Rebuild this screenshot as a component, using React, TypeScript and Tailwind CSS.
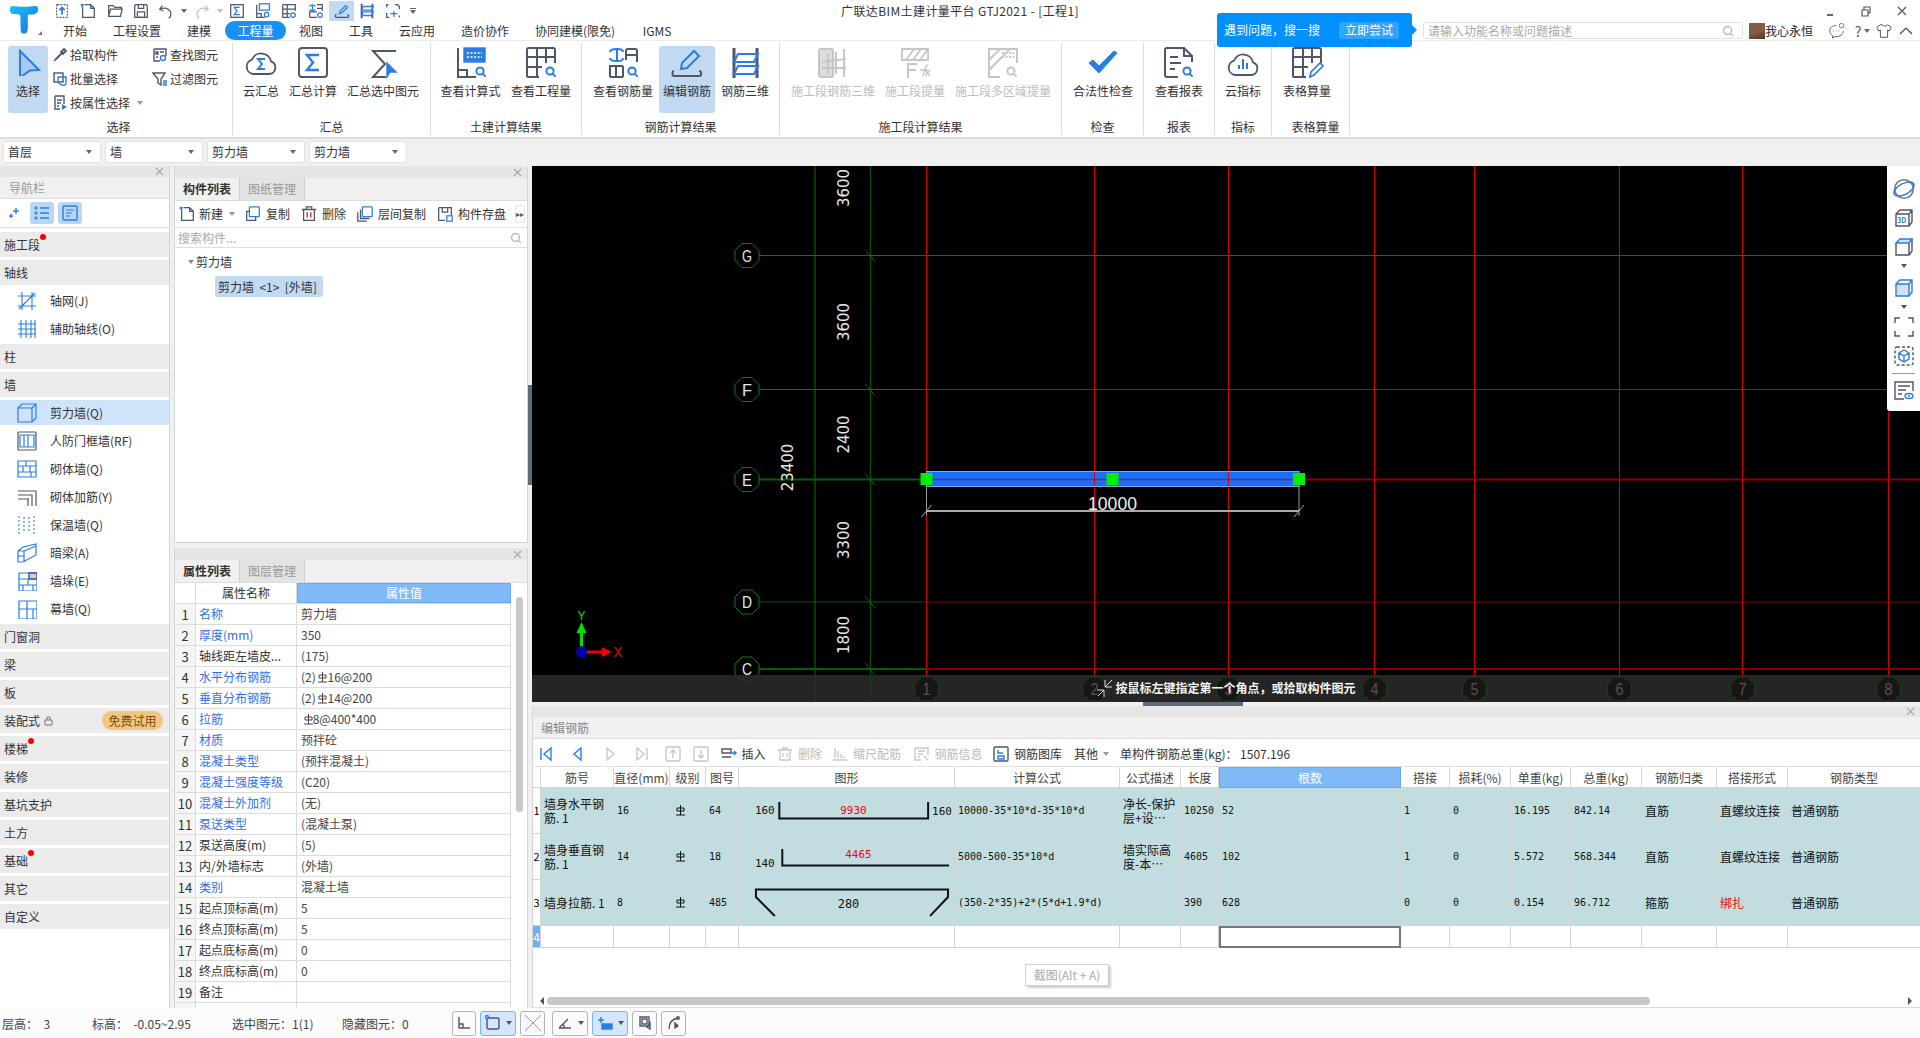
import type { ReactNode } from "react";

const GR = "#50566a";
const BL = "#2b7de3";
const DIS = "#c6c6c6";
const SANS = "font-['Noto_Sans_CJK_SC','Noto_Sans',sans-serif]";

function Ic({ s = 20, v = 20, children, className }: { s?: number; v?: number; children: ReactNode; className?: string }) {
  return (
    <svg width={s} height={s} viewBox={`0 0 ${v} ${v}`} fill="none" strokeWidth={1.4} stroke={GR} className={className}>
      {children}
    </svg>
  );
}

function Caret({ color = "#666" }: { color?: string }) {
  return <span className="inline-block h-0 w-0 border-x-[3px] border-t-[4px] border-x-transparent" style={{ borderTopColor: color }} />;
}

function CloseX() {
  return (
    <Ic s={11} v={11}>
      <path d="M2 2l7 7M9 2l-7 7" stroke="#a8a8a8" strokeWidth={1.1} />
    </Ic>
  );
}

function Mag({ x, y, c = BL }: { x: number; y: number; c?: string }) {
  return (
    <g stroke={c} strokeWidth={2}>
      <circle cx={x} cy={y} r={3.6} />
      <path d={`M${x + 2.6} ${y + 2.6}l3 3`} />
    </g>
  );
}

const ribbonIcons: Record<string, ReactNode> = {
  cloudSum: (
    <>
      <path d="M9 28h16a6.5 6.5 0 0 0 2-12.6A10 10 0 0 0 8 13.6 7.4 7.4 0 0 0 9 28z" strokeWidth={1.8} />
      <path d="M21 13h-7l4 5-4 5h7" stroke={BL} strokeWidth={2} />
    </>
  ),
  boxSum: (
    <>
      <rect x="3" y="2" width="28" height="29" rx="3" strokeWidth={2} />
      <path d="M23 9H11l6 7.5-6 7.5h12" stroke={BL} strokeWidth={2.4} />
    </>
  ),
  sumPick: (
    <>
      <path d="M30 5H7l12 13L7 31h13" strokeWidth={2} />
      <path d="M21 17l9 9h-6l-3 5z" fill={BL} stroke={BL} />
    </>
  ),
  calcView: (
    <>
      <path d="M4 2v29h18M4 24h9v7" strokeWidth={2} />
      <rect x="10" y="2" width="21" height="14" fill={BL} stroke={BL} />
      <path d="M13 7h15M13 11h15" stroke="#fff" strokeWidth={1.6} strokeDasharray="2 1.5" />
      <Mag x={26} y={25} />
    </>
  ),
  gridView: (
    <>
      <path d="M15 31H4a1 1 0 0 1-1-1V4a2 2 0 0 1 2-2h24a2 2 0 0 1 2 2v13M3 11h28M3 21h15M13 2v29M22 2v15" strokeWidth={2} />
      <Mag x={26} y={25} />
    </>
  ),
  rebarView: (
    <>
      <path d="M20 14V5a2 2 0 0 1 2-2h7a2 2 0 0 1 2 2v11M20 9h11M4 31V20h13M4 31h13M10 20v11M17 20v11" strokeWidth={2} />
      <path d="M11 3v12M4 6c0-3 4-3 7-3s6 1 6 3M4 12c0 3 3 3 7 3s6 0 6-3" stroke={BL} strokeWidth={2} />
      <Mag x={26} y={25} />
    </>
  ),
  edit: (
    <>
      <path d="M4 25c-2 0-2 5 0 5h25c3 0 3-5 0-5" strokeWidth={2} />
      <path d="M11 23l1-6L24 5l5 5-12 12z" stroke={BL} strokeWidth={2} />
    </>
  ),
  rebar3d: (
    <>
      <path d="M6 2v30M29 2v30" strokeWidth={3} />
      <path d="M10 8h20l-4 8H6zM10 20h20l-4 8H6z" stroke={BL} strokeWidth={2} />
    </>
  ),
  seg3d: (
    <>
      <rect x="3" y="3" width="14" height="28" rx="2" stroke={DIS} fill="#dcdcdc" strokeWidth={2} />
      <path d="M6 16l24-3M6 22l24 0M12 8v20M20 6v22M28 3v28" stroke={DIS} strokeWidth={2} />
    </>
  ),
  segFx: (
    <>
      <path d="M4 3h26v11H4zM8 14l8-11M15 14l8-11M22 14l8-11" stroke={DIS} strokeWidth={1.8} />
      <path d="M10 32V18h9M10 24h8" stroke={DIS} strokeWidth={2} />
      <path d="M24 30c3 0 2-11 6-11M22 24h8M27 24l5 6M32 24l-5 6" stroke={DIS} strokeWidth={1.4} />
    </>
  ),
  segMulti: (
    <>
      <path d="M14 31H3V3h28v14M3 14L14 3M3 24L24 3" stroke={DIS} strokeWidth={2} />
      <path d="M16 7h12M16 11h12" stroke={DIS} strokeWidth={1.8} strokeDasharray="2 1.5" />
      <Mag x={25} y={25} c={DIS} />
    </>
  ),
  check: <path d="M3 17l10 10L31 7l-3-2L13 20l-6-6z" fill={BL} stroke={BL} strokeWidth={1} />,
  report: (
    <>
      <path d="M16 31H5a2 2 0 0 1-2-2V4a2 2 0 0 1 2-2h17l8 8v6M22 2v8h8" strokeWidth={2} />
      <path d="M8 11h8M8 17h11M8 23h5" strokeWidth={2} />
      <Mag x={25} y={25} />
    </>
  ),
  cloudBars: (
    <>
      <path d="M9 29h16a6.5 6.5 0 0 0 2-12.6A10 10 0 0 0 8 14.6 7.4 7.4 0 0 0 9 29z" strokeWidth={1.8} />
      <path d="M13 19v4M17 13v10M21 17v6" stroke={BL} strokeWidth={2} />
    </>
  ),
  gridPen: (
    <>
      <path d="M16 31H4a1 1 0 0 1-1-1V4a2 2 0 0 1 2-2h24a2 2 0 0 1 2 2v13M3 11h28M3 21h15M13 2v29M22 2v15" strokeWidth={2} />
      <path d="M20 31l1-5 9-9 3 3-9 9z" stroke={BL} strokeWidth={1.6} />
    </>
  ),
};

function RibbonBtn({ label, icon, w, active, disabled }: { label: string; icon: string; w: number; active?: boolean; disabled?: boolean }) {
  return (
    <div
      className={`flex h-[67px] shrink-0 flex-col items-center rounded-[3px] ${active ? "bg-[#c2d9f2]" : ""} ${disabled ? "text-[#bdbdbd]" : "text-[#333]"}`}
      style={{ width: w }}
    >
      <Ic s={34} v={34}>{ribbonIcons[icon]}</Ic>
      <span className="mt-[3px] whitespace-nowrap text-xs leading-4">{label}</span>
    </div>
  );
}

function RibbonGroup({ label, w, pl = 0, children, labelShift = 0 }: { label: string; w: number; pl?: number; children: ReactNode; labelShift?: number }) {
  return (
    <div className="my-[2px] flex h-[92px] shrink-0 flex-col border-r border-[#dcdcdc] pt-[3px]" style={{ width: w }}>
      <div className="flex h-[67px]" style={{ paddingLeft: pl }}>{children}</div>
      <div className="mt-[6px] text-center text-xs leading-4 text-[#333]" style={{ paddingLeft: labelShift }}>{label}</div>
    </div>
  );
}

function SmallCmd({ icon, label, caret }: { icon: ReactNode; label: string; caret?: boolean }) {
  return (
    <div className="flex h-6 items-center gap-[2px] whitespace-nowrap text-xs text-[#333]">
      <Ic s={16} v={16}>{icon}</Ic>
      <span>{label}</span>
      {caret && <span className="ml-[5px] flex"><Caret color="#999" /></span>}
    </div>
  );
}

const quick: [number, ReactNode][] = [
  [26, <><rect x="4" y="3" width="12" height="14" rx="1" strokeDasharray="2 1.4" /><path d="M10 14V7M7 9l3-3 3 3" stroke={BL} strokeWidth={2} /></>],
  [26, <><path d="M6 3h7l4 4v10H4V5M13 3v4h4" /><path d="M2 2h3v3H2z" fill={BL} stroke="none" /></>],
  [27, <path d="M3 16V4h5l2 2h7v2M3 16l2-8h13l-2 8z" />],
  [26, <><path d="M4 3h12l1 2v12H3V4z" /><path d="M7 3v4h6V3M6 11h8v6H6z" /></>],
  [24, <path d="M6 4L3 8l4 2M3 8c8-3 14 1 12 8l-2 2" />],
  [11, <Caret />],
  [26, <path d="M14 4l3 4-4 2M17 8C9 5 3 9 5 16l2 2" stroke="#c4c4c4" />],
  [9, <Caret color="#bbb" />],
  [26, <><rect x="3" y="3" width="14" height="14" /><path d="M13 6H7l3 4-3 4h6" stroke={BL} /></>],
  [26, <><path d="M3 3v14h9M3 13h5v4" /><rect x="6" y="2" width="11" height="7" stroke={BL} /><circle cx="14" cy="14" r="2.5" stroke={BL} /></>],
  [26, <><path d="M3 3h14v7M3 8h14M3 13h8M8 3v14M3 3v14h8" /><circle cx="14.5" cy="14.5" r="2.5" stroke={BL} /></>],
  [27, <><path d="M11 3h6v7M11 7h6M3 17v-6h8M3 17h8" /><path d="M6 3v6M3 5c0-2 6-2 6 0M3 8c0 2 6 2 6 0" stroke={BL} /><circle cx="14.5" cy="14.5" r="2.5" stroke={BL} /></>],
  [25, <><path d="M4 14c-2 0-2 3 0 3h12c2 0 2-3 0-3" /><path d="M7 13l1-3 6-6 2 2-6 6z" stroke={BL} /></>],
  [26, <><path d="M4 2v16M16 2v16" strokeWidth={2} /><path d="M6 5h11l-2 4H4zM6 11h11l-2 4H4z" stroke={BL} /></>],
  [26, <><path d="M5 3H3v3M12 3h3l2 2v3M3 12v5h3M17 17v-2" /><path d="M11 10v7M7 13h8" stroke={BL} /></>],
];

function TopBar() {
  const tabs: [string, number][] = [["开始", 46], ["工程设置", 78], ["建模", 46]];
  const rest: [string, number][] = [["视图", 50], ["工具", 50], ["云应用", 62], ["造价协作", 74], ["协同建模(限免)", 106], ["IGMS", 58]];
  return (
    <div className="relative flex h-[41px] shrink-0 border-b border-[#ececec] bg-white">
      <div className="relative w-[52px] shrink-0">
        <svg width="34" height="34" viewBox="0 0 34 34" className="ml-[7px] mt-[2px]">
          <defs>
            <linearGradient id="logo" x1="0" y1="0" x2="1" y2="1">
              <stop offset="0" stopColor="#1ec0f2" />
              <stop offset="1" stopColor="#1272e6" />
            </linearGradient>
          </defs>
          <path d="M5 4c7 1 17 1 24 0 3 0 3 7-1 8-3 1-6 0-7 1-1 3 1 13-1 17-1 2-5 2-6 0-1-5 0-14-1-17-3-2-9 1-10-4 0-3 0-5 2-5z" fill="url(#logo)" />
        </svg>
        <span className="absolute left-[38px] top-[31px] h-0 w-0 border-b-[4px] border-l-[4px] border-b-[#777] border-l-transparent" />
      </div>
      <div className="flex min-w-0 flex-1 flex-col">
        <div className="-ml-[3px] flex h-[22px] items-center">
          {quick.map(([w, icon], i) => (
            <div key={i} className={`flex h-[20px] shrink-0 items-center justify-center ${i === 12 ? "bg-[#c2d9f2]" : ""}`} style={{ width: w }}>
              {w < 12 ? icon : <Ic s={18}>{icon}</Ic>}
            </div>
          ))}
          <div className="flex w-[14px] flex-col items-center gap-[1px]">
            <span className="h-px w-[6px] bg-[#666]" />
            <Caret />
          </div>
          <div className="ml-auto flex">
            <span className="flex w-9 justify-center"><span className="mt-[9px] h-[2px] w-[6px] bg-[#666]" /></span>
            <span className="flex w-9 justify-center">
              <Ic s={12} v={12}><path d="M2 5h6v6H2zM4 5V2h6v6H8" stroke="#555" strokeWidth={1.2} /></Ic>
            </span>
            <span className="flex w-9 justify-center">
              <Ic s={12} v={12}><path d="M2 2l8 8M10 2l-8 8" stroke="#555" strokeWidth={1.2} /></Ic>
            </span>
          </div>
        </div>
        <div className="flex h-[19px] items-center text-xs text-[#333]">
          {tabs.map(([t, w]) => (
            <span key={t} className="shrink-0 text-center" style={{ width: w }}>{t}</span>
          ))}
          <span className="ml-[3px] h-[19px] w-[61px] shrink-0 rounded-full bg-[#1a90f5] text-center leading-[19px] text-white">工程量</span>
          {rest.map(([t, w]) => (
            <span key={t} className="shrink-0 text-center" style={{ width: w }}>{t}</span>
          ))}
          <div className="ml-auto flex items-center">
            <div className="flex h-[17px] w-[320px] items-center justify-between rounded-[2px] border border-[#e2e2e2] pl-1 pr-2 text-[#a8a8a8]">
              <span>请输入功能名称或问题描述</span>
              <Ic s={12} v={12}><circle cx="5.5" cy="5.5" r="4" stroke="#bbb" /><path d="M8.5 8.5l2.5 2.5" stroke="#bbb" /></Ic>
            </div>
            <span className="ml-[6px] block h-4 w-4 bg-[linear-gradient(160deg,#6b6552,#8a5a3c_55%,#3c3a30)]" />
            <span className="w-12 whitespace-nowrap text-[#222]">我心永恒</span>
            <Ic s={18} className="ml-[15px]">
              <path d="M9 4C5 4 2 6 2 10c0 2 1 4 3 5v3l3-2c5 1 9-2 9-6" stroke="#666" strokeWidth={1.1} />
              <path d="M6 10h.5M9 10h.5M12 10h.5" stroke="#666" />
              <circle cx="15" cy="4" r="2.5" stroke={BL} strokeWidth={1} />
            </Ic>
            <span className="ml-[6px] w-3 text-center text-sm leading-none text-[#555]">?</span>
            <span className="flex w-[5px]"><Caret /></span>
            <Ic s={18} className="ml-[6px]">
              <path d="M6 3L2 6l2 4 2-1v8h8V9l2 1 2-4-4-3c-1 2-5 2-6 0z" stroke="#555" strokeWidth={1.1} />
            </Ic>
            <Ic s={16} className="ml-[5px] mr-[6px]" v={16}><path d="M2 11l6-6 6 6" stroke="#444" strokeWidth={1.2} /></Ic>
          </div>
        </div>
      </div>
      <div className="absolute left-0 right-0 top-[3px] text-center text-xs leading-4 tracking-[0.4px] text-[#333]">广联达BIM土建计量平台 GTJ2021 - [工程1]</div>
      <div className="absolute left-[1217px] top-[13px] z-20 flex h-[34px] w-[195px] items-center rounded-[3px] bg-[#0090ff] pl-[7px] text-xs text-white">
        <span className="whitespace-nowrap">遇到问题，搜一搜</span>
        <span className="ml-[19px] flex h-[17px] w-[60px] items-center justify-center rounded-[2px] bg-[#2ea5ff]">立即尝试</span>
        <span className="absolute -right-[5px] top-[12px] h-0 w-0 border-y-[5px] border-l-[5px] border-y-transparent border-l-[#0090ff]" />
      </div>
    </div>
  );
}

function Ribbon() {
  return (
    <div className="flex h-[98px] shrink-0 border-b-2 border-[#dedede] bg-white">
      <RibbonGroup label="选择" w={233} labelShift={5}>
        <div className="ml-2 flex h-[67px] w-10 flex-col items-center rounded-[3px] bg-[#c2d9f2] text-xs text-[#333]">
          <Ic s={28} v={28} className="mt-[2px]">
            <path d="M6 3l19 19-9 .5-10 7z" fill="#a9c8ef" stroke={BL} strokeWidth={2} />
          </Ic>
          <span className="mt-[7px] leading-4">选择</span>
        </div>
        <div className="-mt-[3px] ml-1 w-[100px]">
          <SmallCmd label="拾取构件" icon={<><path d="M3 13l7-7M9 4l3 3M12 2l2 2-3 3-2-2z" strokeWidth={1.8} /><path d="M2 14l2-2" stroke={BL} /></>} />
          <SmallCmd label="批量选择" icon={<><rect x="2" y="2" width="9" height="9" stroke={GR} /><path d="M6 6h8v6c0 2-2 3-4 2-1 0-4-2-4-4z" stroke={BL} /></>} />
          <SmallCmd label="按属性选择" caret icon={<><path d="M3 1h9v8M3 1v13h5M5 5h5M5 8h4M5 11h2" /><path d="M10 9l5 3-5 3z" fill={BL} stroke="none" /></>} />
        </div>
        <div className="-mt-[3px]">
          <SmallCmd label="查找图元" icon={<><path d="M2 2h12v7M2 2v12h6M4 5h2v2H4zM4 10h2M8 5h4" /><circle cx="11" cy="11" r="2.5" stroke={BL} /></>} />
          <SmallCmd label="过滤图元" icon={<><path d="M1 2h12L9 8v6l-3-2V8z" /><path d="M11 10h4M11 12h4M11 14h4" stroke={BL} /></>} />
        </div>
      </RibbonGroup>
      <RibbonGroup label="汇总" w={198}>
        <RibbonBtn w={56} label="云汇总" icon="cloudSum" />
        <RibbonBtn w={48} label="汇总计算" icon="boxSum" />
        <RibbonBtn w={92} label="汇总选中图元" icon="sumPick" />
      </RibbonGroup>
      <RibbonGroup label="土建计算结果" w={151}>
        <RibbonBtn w={79} label="查看计算式" icon="calcView" />
        <RibbonBtn w={62} label="查看工程量" icon="gridView" />
      </RibbonGroup>
      <RibbonGroup label="钢筋计算结果" w={198}>
        <div className="w-[5px]" />
        <RibbonBtn w={72} label="查看钢筋量" icon="rebarView" />
        <RibbonBtn w={56} label="编辑钢筋" icon="edit" active />
        <RibbonBtn w={60} label="钢筋三维" icon="rebar3d" />
      </RibbonGroup>
      <RibbonGroup label="施工段计算结果" w={282}>
        <div className="w-[5px]" />
        <RibbonBtn w={96} label="施工段钢筋三维" icon="seg3d" disabled />
        <RibbonBtn w={68} label="施工段提量" icon="segFx" disabled />
        <RibbonBtn w={108} label="施工段多区域提量" icon="segMulti" disabled />
      </RibbonGroup>
      <RibbonGroup label="检查" w={82}>
        <RibbonBtn w={82} label="合法性检查" icon="check" />
      </RibbonGroup>
      <RibbonGroup label="报表" w={71}>
        <RibbonBtn w={70} label="查看报表" icon="report" />
      </RibbonGroup>
      <RibbonGroup label="指标" w={57}>
        <RibbonBtn w={56} label="云指标" icon="cloudBars" />
      </RibbonGroup>
      <RibbonGroup label="表格算量" w={78} labelShift={10}>
        <RibbonBtn w={70} label="表格算量" icon="gridPen" />
      </RibbonGroup>
    </div>
  );
}

function SelectorBar() {
  return (
    <div className="flex h-[27px] shrink-0 items-start gap-1 bg-[#f0f0f0] pl-[3px] pt-[2px]">
      {["首层", "墙", "剪力墙", "剪力墙"].map((t, i) => (
        <div key={i} className="flex h-[22px] w-[98px] items-center justify-between rounded-[2px] border border-[#e2e2e2] bg-white pl-1 pr-2 text-xs text-[#333]">
          <span>{t}</span>
          <Caret />
        </div>
      ))}
    </div>
  );
}

const navIcons: Record<string, ReactNode> = {
  a: <path d="M1 5h18M1 15h18M5 1v18M15 1v18M2 18L18 2" stroke={BL} strokeWidth={1.1} />,
  b: <path d="M1 5h18M1 10h18M1 15h18M4 1v18M9 1v18M14 1v18M18 1v18" stroke={BL} strokeWidth={1.1} />,
  c: <path d="M1 5h14v14H1zM1 5l4-4h14v14l-4 4M15 5l4-4" stroke={BL} strokeWidth={1.2} />,
  d: <><rect x="1" y="1" width="18" height="18" rx="1" stroke={GR} strokeWidth={1.2} /><path d="M3 4h14v12H3zM7 4v12M11 4v12" stroke={BL} strokeWidth={1.2} /></>,
  e: <path d="M1 2h18v16H1zM1 7h18M1 13h18M9 2v5M6 7v6M13 7v6M14 13v5" stroke={BL} strokeWidth={1.2} />,
  f: <path d="M1 4h18v15M1 8h14v11M1 12h10v7M11 12v-1" stroke={GR} strokeWidth={1.2} />,
  g: <path d="M2 1v18M17 1v18M7 2v16M12 2v16" stroke={BL} strokeWidth={1.1} strokeDasharray="2 2" />,
  h: <path d="M1 8l5-4 13-3v11l-13 7H1zM1 8h6v11M7 8l12-5M1 13h6" stroke={BL} strokeWidth={1.2} />,
  i: <><path d="M2 2h18v18H2zM2 8h18M2 14h18M11 8v6M6 14v6M16 14v6" stroke={BL} strokeWidth={1.2} /><path d="M12 2h8v6h-8z" fill="#b8d4f5" /></>,
  j: <path d="M2 2h18v18H2zM2 10h18M10 2v18M16 10v10" stroke={BL} strokeWidth={1.2} />,
};

function NavGroup({ label, dot, children }: { label: string; dot?: number; children?: ReactNode }) {
  return (
    <div className="relative mb-[3px] flex h-[25px] shrink-0 items-center bg-[#ebebeb] pl-1 text-xs text-[#333]">
      {label}
      {dot && <span className="absolute top-[2px] size-[6px] rounded-full bg-[#f00]" style={{ left: dot }} />}
      {children}
    </div>
  );
}

function NavItem({ label, icon, active }: { label: string; icon: string; active?: boolean }) {
  return (
    <div className={`mb-[3px] flex h-[25px] shrink-0 items-center pl-[17px] text-xs text-[#333] ${active ? "bg-[#cfe4fb]" : ""}`}>
      <Ic s={20}>{navIcons[icon]}</Ic>
      <span className="ml-[13px]">{label}</span>
    </div>
  );
}

function NavBar() {
  return (
    <div className="flex h-full w-[170px] shrink-0 flex-col overflow-hidden border-r border-[#d5d5d5] bg-white">
      <div className="flex h-[11px] shrink-0 items-center justify-end bg-[#e6e6e6] pr-1"><CloseX /></div>
      <div className="flex h-[22px] shrink-0 items-center border-b border-[#dcdcdc] bg-[#f0f0f0] pl-[9px] text-xs text-[#999]">导航栏</div>
      <div className="flex h-[29px] shrink-0 items-center border-b border-[#dcdcdc] pl-[8px]">
        <Ic s={12} v={12}><path d="M8 1v6M5 4h6M3 7v4M1 9h4" stroke={BL} /></Ic>
        <span className="ml-[10px] flex h-[22px] w-6 items-center justify-center rounded-[3px] bg-[#b9d6f3]">
          <Ic s={16} v={16}><path d="M6 3h9M6 8h9M6 13h9" stroke={BL} /><path d="M1 2h2v2H1zM1 7h2v2H1zM1 12h2v2H1z" stroke={BL} strokeWidth={1} /></Ic>
        </span>
        <span className="ml-1 flex h-[22px] w-6 items-center justify-center rounded-[3px] bg-[#b9d6f3]">
          <Ic s={16} v={16}><rect x="1" y="1" width="14" height="14" rx="1" stroke={BL} /><path d="M4 5h8M4 8h6M4 11h4" stroke={BL} strokeWidth={1} /></Ic>
        </span>
      </div>
      <div className="h-[4px] shrink-0" />
      <NavGroup label="施工段" dot={40} />
      <NavGroup label="轴线" />
      <NavItem label="轴网(J)" icon="a" />
      <NavItem label="辅助轴线(O)" icon="b" />
      <NavGroup label="柱" />
      <NavGroup label="墙" />
      <NavItem label="剪力墙(Q)" icon="c" active />
      <NavItem label="人防门框墙(RF)" icon="d" />
      <NavItem label="砌体墙(Q)" icon="e" />
      <NavItem label="砌体加筋(Y)" icon="f" />
      <NavItem label="保温墙(Q)" icon="g" />
      <NavItem label="暗梁(A)" icon="h" />
      <NavItem label="墙垛(E)" icon="i" />
      <NavItem label="幕墙(Q)" icon="j" />
      <NavGroup label="门窗洞" />
      <NavGroup label="梁" />
      <NavGroup label="板" />
      <NavGroup label="装配式">
        <Ic s={11} v={11} className="ml-[3px]"><path d="M2 5h7v5H2zM4 5V2h3v3" stroke="#777" strokeWidth={1} /></Ic>
        <span className="absolute left-[102px] top-[3px] flex h-[19px] w-[61px] items-center justify-center rounded-full bg-[#f0c680] text-[#7b4c14]">免费试用</span>
      </NavGroup>
      <NavGroup label="楼梯" dot={28} />
      <NavGroup label="装修" />
      <NavGroup label="基坑支护" />
      <NavGroup label="土方" />
      <NavGroup label="基础" dot={28} />
      <NavGroup label="其它" />
      <NavGroup label="自定义" />
    </div>
  );
}

function PanelTabs({ a, b }: { a: string; b: string }) {
  return (
    <>
      <div className="flex h-[12px] shrink-0 items-center justify-end bg-[#e6e6e6] pr-1"><CloseX /></div>
      <div className="flex h-[23px] shrink-0 border-b border-[#dcdcdc] bg-[#f0f0f0] text-xs">
        <span className="flex w-[65px] items-center justify-center border-r border-[#cfcfcf] font-bold text-[#333]">{a}</span>
        <span className="flex w-[65px] items-center justify-center border-r border-[#cfcfcf] bg-[#e3e3e3] text-[#999]">{b}</span>
      </div>
    </>
  );
}

function ListPanel() {
  const cmds: [string, number, ReactNode][] = [
    ["复制", 9, <><rect x="6" y="2" width="11" height="11" rx="1" stroke={BL} /><path d="M6 7H3v10h10v-4" /></>],
    ["删除", 10, <><path d="M4 5h12v12H4zM2 5h16M7 5V2h6v3" /><path d="M8 8v6M12 8v6" stroke="#d02020" /></>],
    ["层间复制", 10, <><rect x="7" y="2" width="11" height="11" rx="1" stroke={BL} /><path d="M5 5v10h10M2 8v10h10" /></>],
    ["构件存盘", 10, <><path d="M3 3h14v8M3 3v14h7M7 3v5h6V3" /><rect x="12" y="12" width="6" height="6" stroke={BL} /></>],
  ];
  return (
    <div className="flex h-[377px] shrink-0 flex-col border border-t-0 border-[#d5d5d5] bg-white">
      <PanelTabs a="构件列表" b="图纸管理" />
      <div className="flex h-[27px] shrink-0 items-center border-b border-[#e3e3e3] pl-[3px] text-xs text-[#333]">
        <Ic s={18}><path d="M6 3h7l4 4v10H4V5M13 3v4h4" /><path d="M2 2h3v3H2z" fill={BL} stroke="none" /></Ic>
        <span className="ml-[3px]">新建</span>
        <span className="ml-[6px] flex"><Caret color="#999" /></span>
        {cmds.map(([t, ml, icon]) => (
          <span key={t} className="flex items-center gap-1" style={{ marginLeft: ml }}>
            <Ic s={18}>{icon}</Ic>
            {t}
          </span>
        ))}
        <span className="ml-[9px] flex h-[18px] w-[10px] items-center justify-center rounded-[2px] border border-[#e6e6e6] text-[8px] text-[#555]">▸▸</span>
      </div>
      <div className="flex h-[20px] shrink-0 items-center justify-between border-b border-[#e0e0e0] px-[3px] text-xs text-[#aaa]">
        搜索构件...
        <Ic s={12} v={12} className="mr-[2px]"><circle cx="5.5" cy="5.5" r="4" stroke="#bbb" /><path d="M8.5 8.5l2.5 2.5" stroke="#bbb" /></Ic>
      </div>
      <div className="flex h-[20px] items-center pl-[13px] pt-[8px] text-xs text-[#333]">
        <Caret color="#888" /><span className="ml-[2px]">剪力墙</span>
      </div>
      <div className="ml-[40px] mt-[8px] flex h-[21px] w-[108px] items-center whitespace-nowrap rounded-[3px] bg-[#c2d9f2] pl-[3px] text-xs text-[#333]">
        剪力墙&nbsp;&nbsp;&lt;1&gt;&nbsp;&nbsp;[外墙]
      </div>
    </div>
  );
}

function RebarMark({ c = "#444" }: { c?: string }) {
  return (
    <svg width="9" height="11" viewBox="0 0 9 11" fill="none" stroke={c} strokeWidth={1} className="inline-block align-[2px]">
      <path d="M1 3h7v3H1zM4.500 0v10M0 10h9" />
    </svg>
  );
}

const props: [string, ReactNode, boolean][] = [
  ["名称", "剪力墙", true],
  ["厚度(mm)", "350", true],
  ["轴线距左墙皮...", "(175)", false],
  ["水平分布钢筋", <>(2) <RebarMark />16@200</>, true],
  ["垂直分布钢筋", <>(2) <RebarMark />14@200</>, true],
  ["拉筋", <>&nbsp;<RebarMark />8@400*400</>, true],
  ["材质", "预拌砼", true],
  ["混凝土类型", "(预拌混凝土)", true],
  ["混凝土强度等级", "(C20)", true],
  ["混凝土外加剂", "(无)", true],
  ["泵送类型", "(混凝土泵)", true],
  ["泵送高度(m)", "(5)", false],
  ["内/外墙标志", "(外墙)", false],
  ["类别", "混凝土墙", true],
  ["起点顶标高(m)", "5", false],
  ["终点顶标高(m)", "5", false],
  ["起点底标高(m)", "0", false],
  ["终点底标高(m)", "0", false],
  ["备注", "", false],
  ["", "", false],
];

function PropPanel() {
  return (
    <div className="relative flex h-[460px] shrink-0 flex-col overflow-hidden border-x border-[#d5d5d5] bg-white">
      <PanelTabs a="属性列表" b="图层管理" />
      <div className="grid h-[21px] w-[336px] shrink-0 grid-cols-[21px_101px_214px] border-b border-[#dcdcdc] text-xs">
        <span className="border-r border-[#dcdcdc]" />
        <span className="flex items-center justify-center border-r border-[#dcdcdc] text-[#333]">属性名称</span>
        <span className="flex items-center justify-center border border-[#6aaaf0] bg-[#7fb9f8] text-white">属性值</span>
      </div>
      {props.map(([k, v, blue], i) => (
        <div key={i} className="grid h-[21px] w-[336px] shrink-0 grid-cols-[21px_101px_214px] border-b border-[#dcdcdc] text-xs text-[#333]">
          <span className="flex items-center justify-center border-r border-[#dcdcdc] bg-[#f5f5f5] text-[13px] leading-none">{i < 19 ? i + 1 : ""}</span>
          <span className={`flex items-center overflow-hidden whitespace-nowrap border-r border-[#dcdcdc] pl-[3px] ${blue ? "text-[#2f6ee8]" : ""}`}>{k}</span>
          <span className="flex items-center whitespace-pre border-r border-[#dcdcdc] pl-[4px] text-[#444]">{v}</span>
        </div>
      ))}
      <div className="absolute right-[4px] top-[49px] h-[215px] w-[7px] rounded-full bg-[#c8c8c8]" />
    </div>
  );
}

function Canvas() {
  const rows: [string, number][] = [["G", 255.5], ["F", 389.5], ["E", 479.5], ["D", 602], ["C", 669]];
  const cols: [string, number][] = [["1", 926.5], ["2", 1094.5], ["3", 1228.5], ["4", 1374.5], ["5", 1474.5], ["6", 1619.5], ["7", 1742.5], ["8", 1888.5]];
  const dims: [string, number][] = [["3600", 188], ["3600", 322], ["2400", 434.5], ["3300", 540], ["1800", 635]];
  const dimStyle = { fontFamily: "'DejaVu Sans',sans-serif", fontSize: 15, fill: "#e8e8e8" };
  const narrow = { fontFamily: "'Liberation Sans',sans-serif" };
  const octagon = (cx: number, cy: number) => `M${cx - 5} ${cy - 12}h10l7 7v10l-7 7h-10l-7-7v-10z`;
  return (
    <div className="relative h-[536px] shrink-0 overflow-hidden bg-black">
      <svg width="1388" height="536" viewBox="532 166 1388 536" className="block">
        <path d="M815 166v536M870.5 166v536" stroke="#0a4a0a" strokeWidth={1.5} />
        {cols.map(([, x]) => <path key={x} d={`M${x} 166v536`} stroke="#d80000" />)}
        {rows.map(([n, y], i) => {
          const dim = i >= 2;
          return (
            <g key={n}>
              <path d={`M759 ${y}H926.5`} stroke={dim ? "#0a5a0a" : "#0a7a0a"} strokeWidth={dim && i !== 3 ? 2 : 1} />
              <path d={`M926.5 ${y}H1920`} stroke={i >= 2 ? "#8a0000" : i === 0 ? "#f00000" : "#d80000"} strokeWidth={i === 2 || i === 4 ? 2 : 1} />
              <path d={`M865 ${y - 6}l10 12`} stroke="#0a6a0a" />
              <path d={octagon(747, y)} stroke="#0a7a0a" />
              <text x={747} y={y + 6} textAnchor="middle" fontSize={16} fill="#e8e8e8" style={narrow} textLength={10} lengthAdjust="spacingAndGlyphs">{n}</text>
            </g>
          );
        })}
        {dims.map(([t, y], i) => (
          <text key={i} transform={`translate(849,${y}) rotate(-90)`} textAnchor="middle" style={dimStyle}>{t}</text>
        ))}
        <text transform="translate(793,467.5) rotate(-90)" textAnchor="middle" style={dimStyle}>23400</text>
        <rect x="926.5" y="471.5" width="372.5" height="15" fill="#1670ff" stroke="#7fa8f0" />
        <path d="M926.5 479.5H1299" stroke="#a02040" strokeWidth={1.5} />
        <path d="M1094.5 472v14M1228.5 472v14" stroke="#d80000" />
        {[926.5, 1112.5, 1299].map((x) => <rect key={x} x={x - 6} y="473" width="12" height="12" fill="#00f000" />)}
        <path d="M926.5 486v30M1299 486v30" stroke="#999" />
        <path d="M926.5 511H1299" stroke="#aaa" strokeWidth={2} />
        <path d="M921.5 517l10-12M1294 517l10-12" stroke="#aaa" />
        <text x={1112.5} y={510} textAnchor="middle" fontSize={18} fill="#f0f0f0" style={narrow} textLength={49} lengthAdjust="spacingAndGlyphs">10000</text>
        <path d="M581.5 652v-24" stroke="#00e000" strokeWidth={3} />
        <path d="M576.5 633l5-11 5 11z" fill="#00e000" />
        <path d="M584 652h20" stroke="#f00000" strokeWidth={3} />
        <path d="M602 647l10 5-10 5z" fill="#f00000" />
        <ellipse cx="581.5" cy="652" rx="5.5" ry="6" fill="#0000a8" />
        <text x={581.5} y={620} textAnchor="middle" fontSize={12} fill="#00e000" style={narrow}>Y</text>
        <text x={618} y={657} textAnchor="middle" fontSize={14} fill="#f00000" style={narrow}>X</text>
        <rect x="532" y="675" width="1388" height="27" fill="#2b2b2b" opacity={0.86} />
        {cols.map(([n, x]) => (
          <g key={n} opacity={0.38}>
            <path d={octagon(x, 689)} stroke="#0a6a0a" />
            <text x={x} y={695} textAnchor="middle" fontSize={16} fill="#999" style={narrow} textLength={8} lengthAdjust="spacingAndGlyphs">{n}</text>
          </g>
        ))}
        <path d="M1105 680v7h7M1097 690h7v7" stroke="#e0e0e0" fill="none" />
        <path d="M1098 696l6-6M1106 686l6-6" stroke="#e0e0e0" />
        <text x={1115.5} y={693} fontSize={12} fontWeight={700} fill="#f4f4f4" style={{ fontFamily: "'Noto Sans CJK SC',sans-serif" }}>按鼠标左键指定第一个角点，或拾取构件图元</text>
      </svg>
      <div className="absolute right-0 top-0 flex h-[245px] w-[33px] flex-col items-center rounded-bl-[3px] bg-white pt-[12px]">
        <Ic s={22}>
          <circle cx="10" cy="10" r="8.5" stroke="#777" />
          <ellipse cx="10" cy="10" rx="10" ry="5" transform="rotate(-28 10 10)" stroke={BL} />
        </Ic>
        <div className="mt-[8px]"><Ic s={20}><path d="M2 6l4-4h12v12l-3 4H2zM2 6h13v12M15 6l3-4" /><text x="3" y="15" fontSize="7" fill={BL} stroke="none" fontWeight={700}>3D</text></Ic></div>
        <div className="mt-[9px]"><Ic s={20}><path d="M2 6v12h13V6M15 18l3-4V2" /><path d="M2 6l4-4h12l-3 4z" stroke={BL} fill="#cfe2fa" /></Ic></div>
        <div className="mt-[7px] flex h-[5px]"><Caret color="#555" /></div>
        <div className="mt-[9px]"><Ic s={20}><path d="M2 6h13v12H2z" fill="#cfe2fa" stroke={BL} /><path d="M2 6l4-4h12v12l-3 4M15 6l3-4" stroke={BL} fill="none" /></Ic></div>
        <div className="mt-[7px] flex h-[5px]"><Caret color="#555" /></div>
        <div className="mt-[7px]"><Ic s={20}><path d="M6 1H1v5M14 1h5v5M1 14v5h5M19 14v5h-5" /></Ic></div>
        <div className="mt-[9px]"><Ic s={20}><rect x="1" y="1" width="18" height="18" rx="2" strokeDasharray="3 2" /><path d="M10 4l5 3v6l-5 3-5-3V7zM5 7l5 3 5-3M10 10v6" stroke={BL} /></Ic></div>
        <span className="mt-[7px] h-px w-[23px] bg-[#999]" />
        <div className="mt-[6px]"><Ic s={20}><path d="M19 11V2H1v17h9M4 6h12M4 10h8M4 14h4" /><ellipse cx="15" cy="16" rx="4" ry="2.5" stroke={BL} /><circle cx="15" cy="16" r="1" fill={BL} stroke="none" /></Ic></div>
      </div>
    </div>
  );
}

const gridClass =
  "grid grid-cols-[8px_73px_56px_36px_33px_216px_165px_61px_38px_182px_49px_61px_60px_71px_75px_71px_133px]";

const headers = ["", "筋号", "直径(mm)", "级别", "图号", "图形", "计算公式", "公式描述", "长度", "根数", "搭接", "损耗(%)", "单重(kg)", "总重(kg)", "钢筋归类", "搭接形式", "钢筋类型"];

function Num({ children }: { children: ReactNode }) {
  return <span className="font-['DejaVu_Sans_Mono',monospace] text-[10px]">{children}</span>;
}

function Shape({ i }: { i: number }) {
  const st = { fontFamily: "'DejaVu Sans Mono',monospace", fontSize: 11 };
  if (i === 0)
    return (
      <svg width="216" height="46" viewBox="0 0 216 46">
        <text x="16" y="26" fill="#111" style={st}>160</text>
        <path d="M40.5 14v16.5H190V14" stroke="#111" strokeWidth={2} fill="none" />
        <text x="115" y="26" fill="#f00" textAnchor="middle" style={st}>9930</text>
        <text x="194" y="27" fill="#111" style={st}>160</text>
      </svg>
    );
  if (i === 1)
    return (
      <svg width="216" height="46" viewBox="0 0 216 46">
        <text x="16" y="33" fill="#111" style={st}>140</text>
        <path d="M43.5 15v16.5H211" stroke="#111" strokeWidth={2} fill="none" />
        <text x="120" y="24" fill="#f00" textAnchor="middle" style={st}>4465</text>
      </svg>
    );
  return (
    <svg width="216" height="46" viewBox="0 0 216 46">
      <path d="M36 36L17 17V9.5h193V17L192 36" stroke="#111" strokeWidth={2} fill="none" />
      <text x="110" y="28" fill="#111" textAnchor="middle" style={{ ...st, fontSize: 12 }}>280</text>
    </svg>
  );
}

const bars = [
  [["墙身水平钢", "筋. 1"], "16", "64", "10000-35*10*d-35*10*d", "净长-保护层+设…", "10250", "52", "1", "0", "16.195", "842.14", "直筋", "直螺纹连接", "普通钢筋"],
  [["墙身垂直钢", "筋. 1"], "14", "18", "5000-500-35*10*d", "墙实际高度-本…", "4605", "102", "1", "0", "5.572", "568.344", "直筋", "直螺纹连接", "普通钢筋"],
  [["墙身拉筋. 1"], "8", "485", "(350-2*35)+2*(5*d+1.9*d)", "", "390", "628", "0", "0", "0.154", "96.712", "箍筋", "绑扎", "普通钢筋"],
] as [string[], ...string[]][];

function BarRow({ i, row }: { i: number; row: [string[], ...string[]] }) {
  const cell = "flex items-center overflow-hidden border-r border-b border-[#d4d4d4] pl-[3px] text-[#111]";
  return (
    <div className={`${gridClass} h-[46px] bg-[#c1dde0] text-xs`}>
      <span className="flex items-center justify-center border-b border-r border-[#d4d4d4] bg-white text-[11px]">{i + 1}</span>
      <span className={`${cell} leading-[14px]`}>
        <span className="whitespace-nowrap">
          {row[0].map((l) => <span key={l} className="block">{l}</span>)}
        </span>
      </span>
      <span className={cell}><Num>{row[1]}</Num></span>
      <span className={`${cell} !pl-[6px]`}><RebarMark c="#111" /></span>
      <span className={cell}><Num>{row[2]}</Num></span>
      <span className={`${cell} !pl-0`}><Shape i={i} /></span>
      <span className={`${cell} whitespace-nowrap`}><Num>{row[3]}</Num></span>
      <span className={`${cell} leading-[14px]`}>{row[4]}</span>
      <span className={cell}><Num>{row[5]}</Num></span>
      <span className={cell}><Num>{row[6]}</Num></span>
      <span className={cell}><Num>{row[7]}</Num></span>
      <span className={cell}><Num>{row[8]}</Num></span>
      <span className={cell}><Num>{row[9]}</Num></span>
      <span className={cell}><Num>{row[10]}</Num></span>
      <span className={cell}>{row[11]}</span>
      <span className={`${cell} ${row[12] === "绑扎" ? "!text-[#f00]" : ""} whitespace-nowrap`}>{row[12]}</span>
      <span className={cell}>{row[13]}</span>
    </div>
  );
}

function LowerTool({ label, icon, ml, off }: { label: string; icon: ReactNode; ml: number; off?: boolean }) {
  return (
    <span className={`flex shrink-0 items-center gap-[5px] whitespace-nowrap ${off ? "text-[#bbb]" : "text-[#333]"}`} style={{ marginLeft: ml }}>
      <Ic s={16} v={16}>{icon}</Ic>
      {label}
    </span>
  );
}

function LowerPanel() {
  const nav = [
    <path d="M3 2v12M13 2L6 8l7 6z" stroke={BL} />,
    <path d="M11 2L4 8l7 6z" stroke={BL} />,
    <path d="M5 2l7 6-7 6z" stroke="#c8c8c8" />,
    <path d="M13 2v12M3 2l7 6-7 6z" stroke="#c8c8c8" />,
    <><rect x="1" y="1" width="14" height="14" rx="1" stroke="#c8c8c8" /><path d="M8 12V4M5 7l3-3 3 3" stroke="#c8c8c8" /></>,
    <><rect x="1" y="1" width="14" height="14" rx="1" stroke="#c8c8c8" /><path d="M8 4v8M5 9l3 3 3-3" stroke="#c8c8c8" /></>,
  ];
  const navW = [5, 16, 15.5, 16, 15.5, 12];
  return (
    <div className="relative flex h-[302px] shrink-0 flex-col overflow-hidden border-l border-[#d5d5d5] bg-white">
      <div className="flex h-[11px] shrink-0 items-center justify-end bg-[#e6e6e6] pr-1"><CloseX /></div>
      <div className="flex h-[22px] shrink-0 items-center border-b border-[#dcdcdc] bg-[#f0f0f0] pl-[8px] text-xs text-[#888]">编辑钢筋</div>
      <div className="flex h-[28px] shrink-0 items-center border-b border-[#e0e0e0] pt-[2px] text-xs">
        {nav.map((d, i) => (
          <span key={i} className="shrink-0" style={{ marginLeft: navW[i] }}><Ic s={16} v={16}>{d}</Ic></span>
        ))}
        <LowerTool ml={11.5} label="插入" icon={<><path d="M1 3h9v4H1zM1 11h9" /><path d="M10 7h5M13 5l2 2-2 2" stroke={BL} /></>} />
        <LowerTool ml={11.5} off label="删除" icon={<path d="M3 4h10v10H3zM1 4h14M6 4V2h4v2M6 7v4M10 7v4" stroke="#c8c8c8" />} />
        <LowerTool ml={10} off label="缩尺配筋" icon={<path d="M1 14h14M3 2v10M6 5v7M9 8v4M12 10v2" stroke="#c8c8c8" />} />
        <LowerTool ml={12.5} off label="钢筋信息" icon={<path d="M1 2h13v7M1 2v12h6M4 5h7M4 8h5M4 11h2M10 10l4 4" stroke="#c8c8c8" />} />
        <LowerTool ml={10.5} label="钢筋图库" icon={<><rect x="1" y="1" width="14" height="14" rx="1" /><path d="M5 4v3h5M5 10h6v3H5z" stroke={BL} /></>} />
        <span className="ml-[12px] whitespace-nowrap text-[#333]">其他</span>
        <span className="ml-[5px] flex"><Caret color="#999" /></span>
        <span className="ml-[11px] w-[120px] whitespace-nowrap text-[#333]">单构件钢筋总重(kg)：</span>
        <span className="whitespace-nowrap text-[#333]">1507.196</span>
      </div>
      <div className={`${gridClass} h-[21px] shrink-0 text-xs text-[#444]`}>
        {headers.map((h, i) => (
          <span
            key={i}
            className={`flex items-center justify-center whitespace-nowrap pt-px ${h === "根数" ? "border border-[#6aaaf0] bg-[#7fb9f8] text-white" : "border-b border-r border-[#d4d4d4]"}`}
          >
            {h}
          </span>
        ))}
      </div>
      {bars.map((r, i) => <BarRow key={i} i={i} row={r} />)}
      <div className={`${gridClass} h-[22px] shrink-0`}>
        {headers.map((h, i) => (
          <span
            key={i}
            className={`flex items-center justify-center text-xs ${i === 0 ? "bg-[#6fb0f0] text-white" : ""} ${h === "根数" ? "border-2 border-[#777]" : "border-b border-r border-[#d4d4d4]"}`}
          >
            {i === 0 ? "4" : ""}
          </span>
        ))}
      </div>
      <div className="flex-1" />
      <div className="flex h-[12px] shrink-0 items-center border-b border-[#dcdcdc] pb-[1px] pl-[7px]">
        <span className="h-0 w-0 border-y-[4px] border-r-[4px] border-y-transparent border-r-[#555]" />
        <span className="ml-[3px] h-[8px] w-[1103px] rounded-full bg-[#c8c8c8]" />
        <span className="ml-auto mr-[8px] h-0 w-0 border-y-[4px] border-l-[4px] border-y-transparent border-l-[#555]" />
      </div>
      <div className="absolute left-[492px] top-[258px] flex h-[22px] w-[84px] items-center justify-center border border-[#cfcfcf] bg-white text-xs text-[#aaa] shadow-[2px_2px_2px_rgba(0,0,0,0.2)]">截图(Alt + A)</div>
    </div>
  );
}

function StatusBar() {
  const btn = "flex h-[25px] items-center justify-center rounded-[3px] border border-[#b4b4b4]";
  const on = "flex h-[25px] items-center justify-center rounded-[3px] border border-[#7fb3ec] bg-[#d3e6fb]";
  return (
    <div className="flex h-[30px] shrink-0 items-center bg-[#fbfbfb] text-xs text-[#444]">
      <span className="ml-[2px] w-[90px] whitespace-pre pt-[2px]">层高：  3</span>
      <span className="w-[140px] whitespace-pre pt-[2px]">标高：  -0.05~2.95</span>
      <span className="w-[110px] whitespace-pre pt-[2px]">选中图元：1(1)</span>
      <span className="w-[110px] whitespace-pre pt-[2px]">隐藏图元：0</span>
      <div className="flex items-center gap-[4px]">
        <span className={`${btn} w-[24px]`}><Ic s={16} v={16}><path d="M3 2v11h11M3 9h4v4" /></Ic></span>
        <span className={`${on} w-[36px] gap-[5px]`}><Ic s={16} v={16}><rect x="2" y="3" width="12" height="11" rx="2" /><circle cx="2" cy="2" r="1.5" stroke={BL} /></Ic><Caret color="#555" /></span>
        <span className={`${btn} w-[25px]`}><Ic s={18} v={18}><path d="M1 1l16 16M17 1L1 17" stroke="#999" strokeWidth={1} /></Ic></span>
        <span className={`${btn} ml-[3px] w-[36px] gap-[5px]`}><Ic s={16} v={16}><path d="M2 13h12M2 13l9-9M6 9l2 4" /></Ic><Caret color="#555" /></span>
        <span className={`${on} w-[36px] gap-[5px]`}><Ic s={16} v={16}><path d="M4 2v6M1 5h6" stroke={BL} /><rect x="5" y="9" width="10" height="5" fill={BL} stroke={BL} /></Ic><Caret color="#555" /></span>
        <span className={`${btn} w-[25px]`}><Ic s={16} v={16}><path d="M3 2h9v9H3zM5 4h5v5H5zM13 8v6l-3-2z" /></Ic></span>
        <span className={`${btn} w-[25px]`}><Ic s={16} v={16}><path d="M3 14c0-6 3-10 9-11" /><circle cx="12" cy="3" r="1.3" /><path d="M9 8l3 3-3 2z" fill={GR} /></Ic></span>
      </div>
    </div>
  );
}

export default function App() {
  return (
    <div className={`flex h-[1038px] w-[1920px] flex-col overflow-hidden bg-white ${SANS}`}>
      <TopBar />
      <Ribbon />
      <SelectorBar />
      <div className="flex h-[842px] shrink-0 bg-[#f0f0f0]">
        <NavBar />
        <div className="w-1 shrink-0" />
        <div className="flex w-[354px] shrink-0 flex-col gap-[5px]">
          <ListPanel />
          <PropPanel />
        </div>
        <div className="relative w-1 shrink-0">
          <span className="absolute left-0 top-[219px] h-[100px] w-1 bg-[#5f6b7a]" />
        </div>
        <div className="flex min-w-0 flex-1 flex-col">
          <Canvas />
          <div className="flex h-1 shrink-0 justify-center bg-[#f0f0f0] pr-[66px]">
            <span className="h-1 w-[100px] bg-[#5f6b7a]" />
          </div>
          <LowerPanel />
        </div>
      </div>
      <StatusBar />
    </div>
  );
}
